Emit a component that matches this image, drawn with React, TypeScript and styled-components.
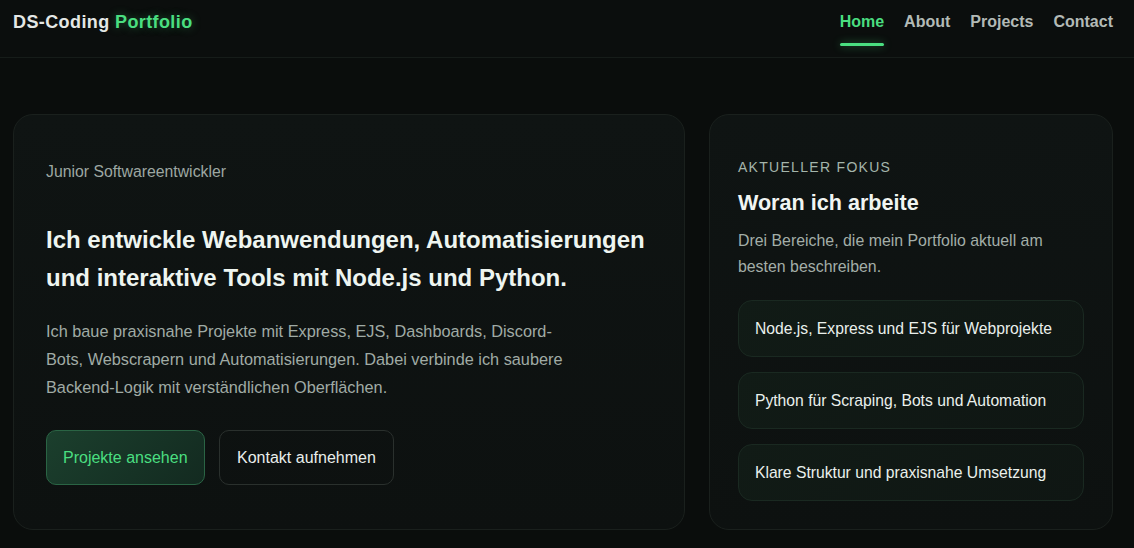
import React from "react"
import styled, { createGlobalStyle } from "styled-components"

const GlobalStyle = createGlobalStyle`
  * { box-sizing: border-box; }
  body {
    margin: 0;
    background: #0a0d0c;
    font-family: "Liberation Sans", Arial, sans-serif;
    color: #e8eee9;
  }
`

const Header = styled.header`
  height: 58px;
  display: flex;
  justify-content: space-between;
  align-items: flex-start;
  padding: 0 21px 0 13px;
  background: #0b0e0d;
  border-bottom: 1px solid #161c19;
`

const Logo = styled.div`
  font-size: 18px;
  font-weight: 700;
  letter-spacing: 0.4px;
  line-height: 21px;
  padding-top: 11.5px;
  color: #e4e7e5;
`

const LogoAccent = styled.span`
  color: #4ade80;
  text-shadow: 0 0 10px rgba(74, 222, 128, 0.35);
`

const Nav = styled.nav`
  display: flex;
  gap: 20px;
`

const NavLink = styled.a<{ $active?: boolean }>`
  position: relative;
  display: block;
  padding: 13px 0 15px;
  font-size: 16px;
  font-weight: 700;
  line-height: 18px;
  color: ${p => (p.$active ? "#4ade80" : "#b3bab6")};
  text-decoration: none;
  cursor: pointer;

  &::after {
    content: "";
    position: absolute;
    left: 0;
    right: 0;
    top: 43px;
    height: 3px;
    border-radius: 2px;
    background: #4ade80;
    box-shadow: 0 0 8px rgba(74, 222, 128, 0.45);
    display: ${p => (p.$active ? "block" : "none")};
  }
`

const Main = styled.main`
  display: grid;
  grid-template-columns: 1.663fr 1fr;
  gap: 24px;
  padding: 56px 21px 40px 13px;
`

const Card = styled.section<{ $pad: string }>`
  background: linear-gradient(180deg, #0f1413 0%, #0d1110 100%);
  border: 1px solid #1a201d;
  border-radius: 20px;
  padding: ${p => p.$pad};
  display: flex;
  flex-direction: column;
`

const Role = styled.p`
  margin: 0 0 38px;
  font-size: 15.8px;
  line-height: 22.5px;
  color: #9da7a2;
`

const Headline = styled.h1`
  margin: 0 0 21px;
  font-size: 24px;
  font-weight: 700;
  line-height: 37.5px;
  color: #eef5f0;
`

const Lead = styled.p`
  margin: 0 0 29px;
  max-width: 530px;
  font-size: 16.3px;
  line-height: 28px;
  color: #a0aba5;
`

const Actions = styled.div`
  display: flex;
  gap: 14px;
`

const Button = styled.a<{ $primary?: boolean }>`
  height: 55px;
  display: inline-flex;
  align-items: center;
  padding: 0 ${p => (p.$primary ? "16px" : "17.5px")};
  border-radius: 10px;
  font-size: 16px;
  text-decoration: none;
  cursor: pointer;
  color: ${p => (p.$primary ? "#4ade80" : "#e9eeeb")};
  background: ${p => (p.$primary ? "linear-gradient(135deg, #1b3f2d 0%, #132a20 100%)" : "transparent")};
  border: 1px solid ${p => (p.$primary ? "#2a6444" : "#2a302d")};
`

const Eyebrow = styled.p`
  margin: 0 0 11px;
  font-size: 14px;
  line-height: 21px;
  letter-spacing: 1.3px;
  text-transform: uppercase;
  color: #a4b5ab;
`

const Title = styled.h2`
  margin: 0 0 12.5px;
  font-size: 21.6px;
  font-weight: 700;
  line-height: 27px;
  color: #f1f5f2;
`

const Description = styled.p`
  margin: 0 0 20px;
  font-size: 15.9px;
  line-height: 26px;
  color: #a3aea8;
`

const FocusList = styled.div`
  display: flex;
  flex-direction: column;
  gap: 15px;
`

const FocusItem = styled.div`
  height: 57px;
  display: flex;
  align-items: center;
  padding: 0 16px;
  border-radius: 14px;
  background: linear-gradient(135deg, #111b16 0%, #0f1613 100%);
  border: 1px solid #1a2921;
  font-size: 15.7px;
  color: #eaf0ec;
`

const focus = [
  "Node.js, Express und EJS für Webprojekte",
  "Python für Scraping, Bots und Automation",
  "Klare Struktur und praxisnahe Umsetzung",
]

const App: React.FC = () => {
  return (
    <>
      <GlobalStyle />
      <Header>
        <Logo>
          DS-Coding <LogoAccent>Portfolio</LogoAccent>
        </Logo>
        <Nav>
          <NavLink $active>Home</NavLink>
          <NavLink>About</NavLink>
          <NavLink>Projects</NavLink>
          <NavLink>Contact</NavLink>
        </Nav>
      </Header>
      <Main>
        <Card $pad="45.5px 32px 44px">
          <Role>Junior Softwareentwickler</Role>
          <Headline>
            Ich entwickle Webanwendungen, Automatisierungen und interaktive Tools mit Node.js und Python.
          </Headline>
          <Lead>
            Ich baue praxisnahe Projekte mit Express, EJS, Dashboards, Discord-Bots, Webscrapern und
            Automatisierungen. Dabei verbinde ich saubere Backend-Logik mit verständlichen Oberflächen.
          </Lead>
          <Actions>
            <Button $primary>Projekte ansehen</Button>
            <Button>Kontakt aufnehmen</Button>
          </Actions>
        </Card>
        <Card $pad="41.5px 28px 28px">
          <Eyebrow>Aktueller Fokus</Eyebrow>
          <Title>Woran ich arbeite</Title>
          <Description>Drei Bereiche, die mein Portfolio aktuell am besten beschreiben.</Description>
          <FocusList>
            {focus.map(f => (
              <FocusItem key={f}>{f}</FocusItem>
            ))}
          </FocusList>
        </Card>
      </Main>
    </>
  )
}

export default App
